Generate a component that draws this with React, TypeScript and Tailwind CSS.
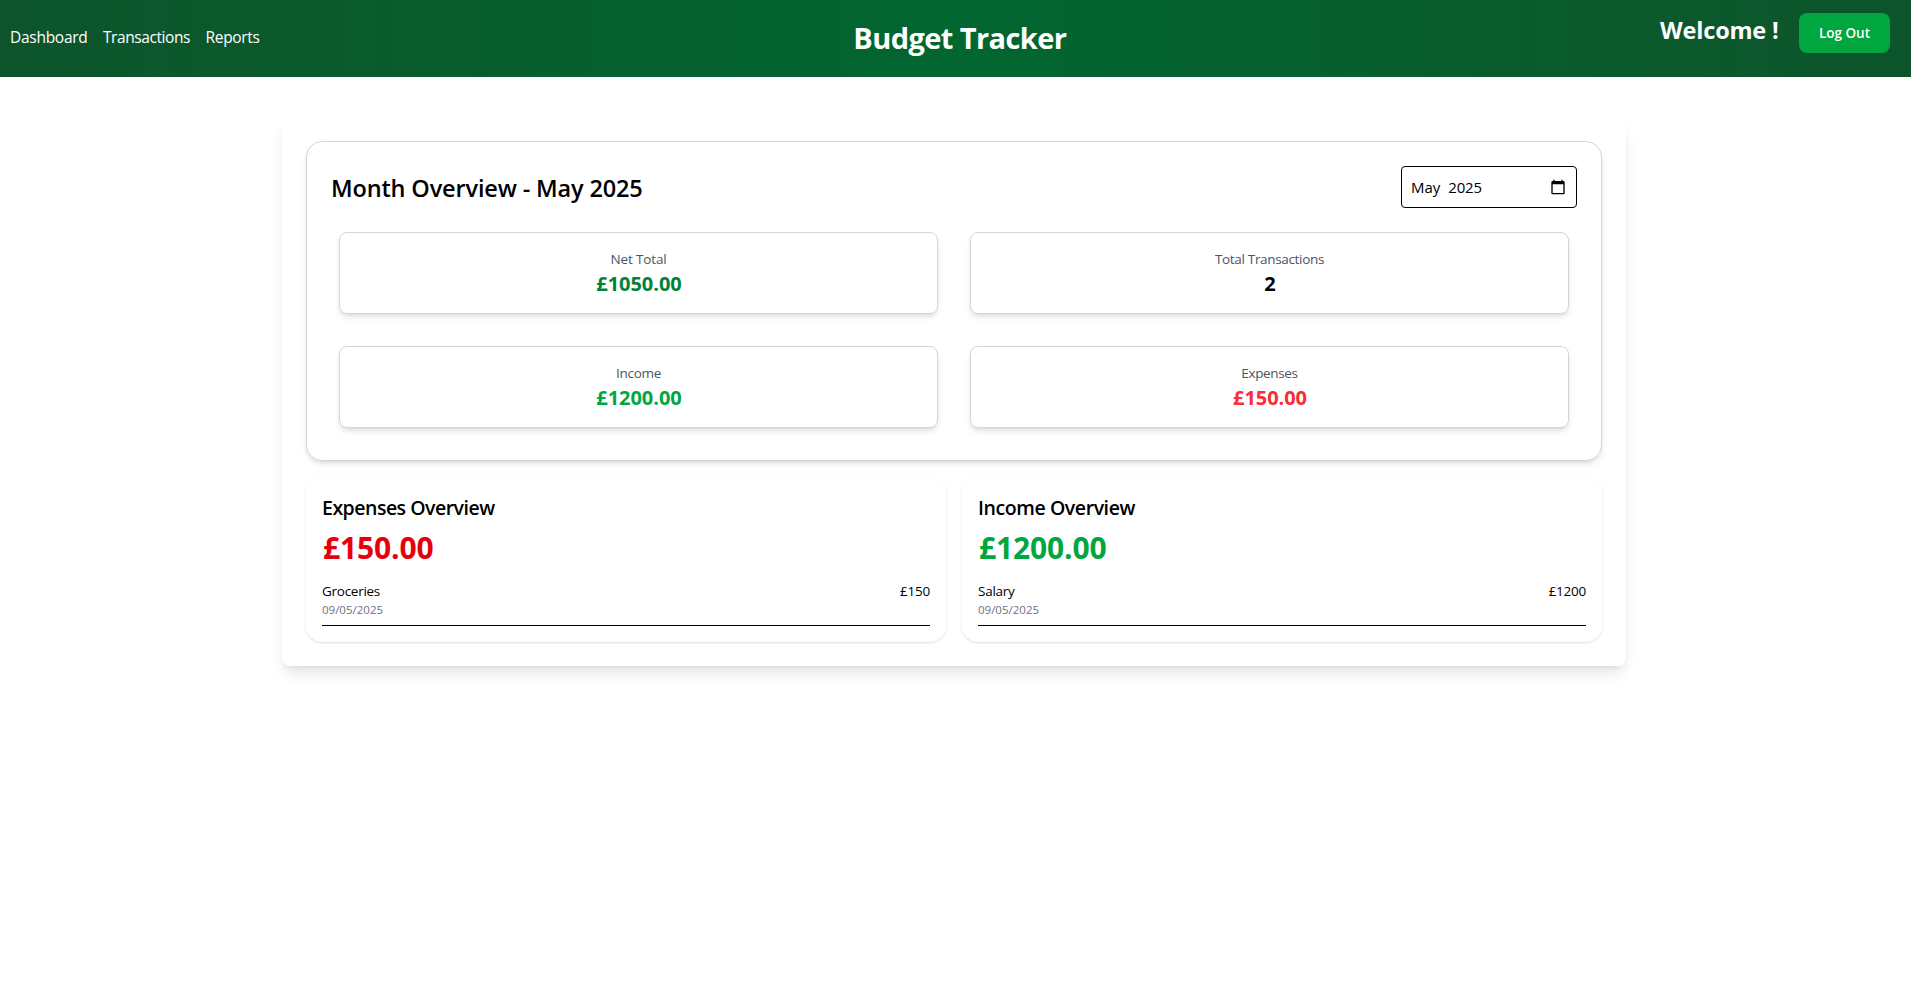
type Entry = { name: string; date: string; amount: string; nameClass: string; amountClass: string };

const links = [
  { label: 'Dashboard', className: 'tracking-[-0.28px]' },
  { label: 'Transactions', className: 'tracking-[-0.42px]' },
  { label: 'Reports', className: 'tracking-[-0.33px]' },
];

const stats = [
  { label: 'Net Total', value: '£1050.00', labelClass: 'tracking-[-0.14px]', color: 'text-green-700' },
  { label: 'Total Transactions', value: '2', labelClass: 'tracking-[-0.33px]', color: 'text-black' },
  { label: 'Income', value: '£1200.00', labelClass: 'tracking-[-0.28px]', color: 'text-green-600' },
  { label: 'Expenses', value: '£150.00', labelClass: 'tracking-[-0.36px]', color: 'text-red-500' },
];

function CalendarIcon() {
  return (
    <svg viewBox="0 0 24 24" className="size-4 fill-black" aria-hidden="true">
      <path d="M20 3h-1V1h-2v2H7V1H5v2H4c-1.1 0-2 .9-2 2v16c0 1.1.9 2 2 2h16c1.1 0 2-.9 2-2V5c0-1.1-.9-2-2-2zm0 18H4V8h16v13z" />
    </svg>
  );
}

function Header() {
  return (
    <header className="flex h-[77px] items-start justify-between bg-gradient-to-r from-green-900 via-green-800 to-green-900 pr-[21px] pl-2.5 text-white">
      <nav className="flex gap-[15.5px] pt-[25px] text-[15.5px] leading-6">
        {links.map((link) => (
          <a key={link.label} href="#" className={link.className}>
            {link.label}
          </a>
        ))}
      </nav>
      <h1 className="pt-5 text-[29px] leading-9 font-bold tracking-[-0.59px]">Budget Tracker</h1>
      <div className="flex items-start gap-[20.5px] pt-[13px]">
        <p className="pt-px text-[23.5px] leading-8 font-bold tracking-[-0.2px]">Welcome !</p>
        <button className="h-10 w-[91px] rounded-lg bg-green-600 text-[13.5px] leading-5 font-semibold">Log Out</button>
      </div>
    </header>
  );
}

function StatCard({ label, value, labelClass, color }: (typeof stats)[number]) {
  return (
    <div className="m-2 rounded-lg border border-gray-300 px-4 pt-4 pb-[15px] text-center shadow-md">
      <p className={`mb-px text-[13.5px] leading-5 text-gray-600 ${labelClass}`}>{label}</p>
      <p className={`pl-px text-xl leading-7 font-bold tracking-[-0.06px] ${color}`}>{value}</p>
    </div>
  );
}

function OverviewCard({
  title,
  titleClass,
  total,
  totalClass,
  entry,
}: {
  title: string;
  titleClass: string;
  total: string;
  totalClass: string;
  entry: Entry;
}) {
  return (
    <section className="rounded-2xl px-4 pt-[17px] pb-4 shadow-sm">
      <h3 className={`mb-2 text-[19.5px] leading-7 font-semibold ${titleClass}`}>{title}</h3>
      <p className={`mb-[15px] pl-px text-3xl leading-9 font-bold ${totalClass}`}>{total}</p>
      <ul>
        <li className="flex justify-between border-b border-black pb-[7px] text-[13.5px] leading-5">
          <div>
            <p className={entry.nameClass}>{entry.name}</p>
            <p className="pt-px text-[11.5px] leading-4 text-gray-500">{entry.date}</p>
          </div>
          <span className={entry.amountClass}>{entry.amount}</span>
        </li>
      </ul>
    </section>
  );
}

export default function App() {
  return (
    <div className="min-h-screen bg-white font-['Open_Sans',sans-serif] text-black">
      <Header />
      <main className="mt-10 ml-[282px] w-[1344px] rounded-lg p-6 shadow-lg">
        <section className="rounded-2xl border border-gray-300 p-6 shadow-md">
          <div className="mb-4 flex h-[42px] items-center justify-between">
            <h2 className="pt-0.5 text-[23.5px] leading-8 font-semibold tracking-[-0.15px]">Month Overview - May 2025</h2>
            <button
              type="button"
              className="flex h-[42px] w-44 items-center justify-between rounded border border-black pr-2.5 pl-[9px]"
            >
              <span className="flex gap-2 text-[15px] leading-6">
                <span>May</span>
                <span className="tracking-[-0.2px]">2025</span>
              </span>
              <CalendarIcon />
            </button>
          </div>
          <div className="grid grid-cols-2 gap-4">
            {stats.map((stat) => (
              <StatCard key={stat.label} {...stat} />
            ))}
          </div>
        </section>
        <div className="mt-4 grid grid-cols-2 gap-4">
          <OverviewCard
            title="Expenses Overview"
            titleClass="tracking-[-0.5px]"
            total="£150.00"
            totalClass="text-red-600 tracking-[-0.15px]"
            entry={{
              name: 'Groceries',
              date: '09/05/2025',
              amount: '£150',
              nameClass: 'tracking-[-0.27px]',
              amountClass: 'tracking-[-0.25px]',
            }}
          />
          <OverviewCard
            title="Income Overview"
            titleClass="tracking-[-0.42px]"
            total="£1200.00"
            totalClass="text-green-600 tracking-[-0.14px]"
            entry={{
              name: 'Salary',
              date: '09/05/2025',
              amount: '£1200',
              nameClass: 'tracking-[-0.25px]',
              amountClass: 'tracking-[-0.25px]',
            }}
          />
        </div>
      </main>
    </div>
  );
}
